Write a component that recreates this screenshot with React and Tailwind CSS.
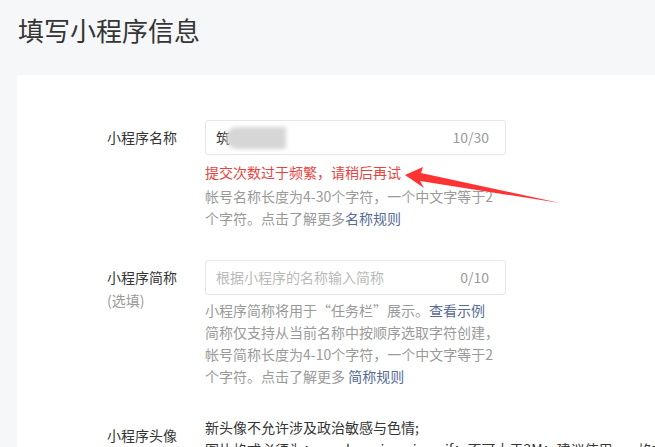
const font = { fontFamily: '"Noto Sans CJK SC", "Noto Sans", sans-serif' };

const Row = ({ label, sub, children, labelClass = "" }) => (
  <div className="flex">
    <div className={`w-[98px] shrink-0 ${labelClass}`}>
      <div className="text-[14px] leading-[35px] text-[#353535]">{label}</div>
      {sub && <div className="-mt-[6px] text-[14px] leading-[22px] text-[#9a9a9a]">{sub}</div>}
    </div>
    <div className="flex-1">{children}</div>
  </div>
);

const Input = ({ children, counter }) => (
  <div className="flex h-[35px] w-[301px] items-center rounded-[3px] border border-[#e7e7eb] bg-white pl-[10px] pr-[16px] text-[14px]">
    <div className="flex flex-1 items-center">{children}</div>
    <span className="text-[#9a9a9a]">{counter}</span>
  </div>
);

export default function App() {
  return (
    <div className="relative h-[447px] w-[655px] overflow-hidden bg-[#f6f7f9]" style={font}>
      <h1 className="pl-[18px] pt-[14px] text-[26px] font-normal leading-[32px] text-[#353535]">
        填写小程序信息
      </h1>
      <div className="ml-[17px] mt-[29px] min-h-[400px] rounded-tl-[4px] bg-white pl-[90px] pt-[45px]">
        <Row label="小程序名称">
          <Input counter="10/30">
            <span className="text-[#353535]">筑</span>
            <div className="-ml-[4px] h-[22px] w-[60px] rounded-l-full bg-[#d6d6d6] blur-[2px]" />
          </Input>
          <div className="mt-[6px] text-[14px] leading-[22px] text-[#e64340]">提交次数过于频繁，请稍后再试</div>
          <div className="mt-[2px] text-[14px] leading-[22px] text-[#9a9a9a]">
            帐号名称长度为4-30个字符，一个中文字等于2
            <br />
            个字符。点击了解更多<a className="text-[#576b95]">名称规则</a>
          </div>
        </Row>
        <div className="h-[31px]" />
        <Row label="小程序简称" sub="(选填)">
          <Input counter="0/10">
            <span className="text-[#bababa]">根据小程序的名称输入简称</span>
          </Input>
          <div className="mt-[4px] text-[14px] leading-[22px] text-[#9a9a9a]">
            小程序简称将用于“任务栏”展示。<a className="text-[#576b95]">查看示例</a>
            <br />
            简称仅支持从当前名称中按顺序选取字符创建，
            <br />
            帐号简称长度为4-10个字符，一个中文字等于2
            <br />
            个字符。点击了解更多 <a className="text-[#576b95]">简称规则</a>
          </div>
        </Row>
        <div className="h-[30px]" />
        <Row label="小程序头像" labelClass="pt-[1px]">
          <div className="-mt-[1px] whitespace-nowrap text-[14px] leading-[22px] text-[#353535]">
            新头像不允许涉及政治敏感与色情;
            <br />
            图片格式必须为：png,bmp,jpeg,jpg,gif；不可大于2M；建议使用png格式图片
          </div>
        </Row>
      </div>
      <svg className="pointer-events-none absolute left-0 top-0" width="655" height="447">
        <polygon
          points="405,175 423,167 421,173 560,203 420,181 424,188"
          fill="#ff3333"
        />
      </svg>
    </div>
  );
}
